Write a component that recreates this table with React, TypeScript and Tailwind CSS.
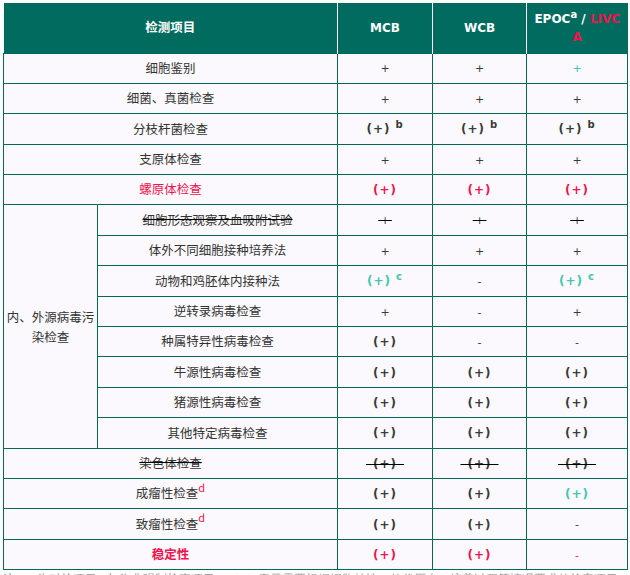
const cjk = { fontFamily: '"Noto Sans CJK SC", "Noto Sans", sans-serif' };
const lat = { fontFamily: '"DejaVu Sans", Verdana, sans-serif' };

type Mark = {
  v: string;
  sup?: string;
  tone?: "dark" | "red" | "teal";
  strike?: boolean;
};

type Row = {
  label: string;
  labelTone?: "dark" | "red";
  bold?: boolean;
  strike?: boolean;
  labelSup?: string;
  cells: Mark[];
  group?: boolean;
};

const toneClass = {
  dark: "text-[#3a3a3a]",
  red: "text-[#f0134d]",
  teal: "text-[#45c4b4]",
};

const P: Mark = { v: "+" };
const PP: Mark = { v: "(+)" };
const D: Mark = { v: "-" };

const rows: Row[] = [
  { label: "细胞鉴别", cells: [P, P, { v: "+", tone: "teal" }] },
  { label: "细菌、真菌检查", cells: [P, P, P] },
  {
    label: "分枝杆菌检查",
    cells: [
      { v: "(+)", sup: "b" },
      { v: "(+)", sup: "b" },
      { v: "(+)", sup: "b" },
    ],
  },
  { label: "支原体检查", cells: [P, P, P] },
  {
    label: "螺原体检查",
    labelTone: "red",
    cells: [
      { v: "(+)", tone: "red" },
      { v: "(+)", tone: "red" },
      { v: "(+)", tone: "red" },
    ],
  },
  {
    label: "细胞形态观察及血吸附试验",
    strike: true,
    group: true,
    cells: [
      { v: "+", strike: true },
      { v: "+", strike: true },
      { v: "+", strike: true },
    ],
  },
  { label: "体外不同细胞接种培养法", group: true, cells: [P, P, P] },
  {
    label: "动物和鸡胚体内接种法",
    group: true,
    cells: [
      { v: "(+)", sup: "c", tone: "teal" },
      D,
      { v: "(+)", sup: "c", tone: "teal" },
    ],
  },
  { label: "逆转录病毒检查", group: true, cells: [P, D, P] },
  { label: "种属特异性病毒检查", group: true, cells: [PP, D, D] },
  { label: "牛源性病毒检查", group: true, cells: [PP, PP, PP] },
  { label: "猪源性病毒检查", group: true, cells: [PP, PP, PP] },
  { label: "其他特定病毒检查", group: true, cells: [PP, PP, PP] },
  {
    label: "染色体检查",
    strike: true,
    cells: [
      { v: "(+)", strike: true },
      { v: "(+)", strike: true },
      { v: "(+)", strike: true },
    ],
  },
  { label: "成瘤性检查", labelSup: "d", cells: [PP, PP, { v: "(+)", tone: "teal" }] },
  { label: "致瘤性检查", labelSup: "d", cells: [PP, PP, D] },
  {
    label: "稳定性",
    labelTone: "red",
    bold: true,
    cells: [
      { v: "(+)", tone: "red" },
      { v: "(+)", tone: "red" },
      { v: "-", tone: "red" },
    ],
  },
];

const td = "border border-[#00695c] text-center align-middle h-[30.4px] p-0";

function MarkCell({ m }: { m: Mark }) {
  const tone = toneClass[m.tone ?? "dark"];
  const paren = m.v === "(+)";
  return (
    <td className={td}>
      <span
        className={`${tone} ${paren ? "text-[12px] font-semibold tracking-[1px]" : "text-[11px]"}`}
        style={lat}
      >
        <span className={m.strike ? "line-through decoration-black" : ""}>
          {m.strike ? (paren ? "\u2002(+)\u2002" : "\u2009+\u2009") : m.v}
        </span>
        {m.sup && (
          <sup className="ml-[5px] text-[10px] font-bold top-[-0.5em]">{m.sup}</sup>
        )}
      </span>
    </td>
  );
}

export default function App() {
  return (
    <div className="w-[630px] h-[575px] overflow-hidden bg-white">
      <table
        className="ml-[3px] mt-[3px] w-[624px] border-collapse table-fixed bg-[#fbf9fd]"
        style={cjk}
      >
        <colgroup>
          <col className="w-[94px]" />
          <col className="w-[240px]" />
          <col className="w-[95px]" />
          <col className="w-[94px]" />
          <col className="w-[101px]" />
        </colgroup>
        <thead>
          <tr className="bg-[#006b5e] text-white">
            <th colSpan={2} className="h-[50px] border-r border-white text-[12.5px] font-bold p-0">
              检测项目
            </th>
            <th className="border-r border-white text-[12px] font-bold p-0" style={lat}>
              MCB
            </th>
            <th className="border-r border-white text-[12px] font-bold p-0" style={lat}>
              WCB
            </th>
            <th className="text-[12px] font-bold p-0 leading-[18px]" style={lat}>
              EPOC<sup className="text-[10px] top-[-0.45em]">a</sup> /{" "}
              <span className="text-[#f0134d]">
                LIVC
                <br />A
              </span>
            </th>
          </tr>
        </thead>
        <tbody className="text-[12.5px] text-[#333333]">
          {rows.map((r, i) => {
            const labelCls = `${r.labelTone === "red" ? "text-[#f0134d]" : ""} ${
              r.bold ? "font-bold" : ""
            } ${r.strike ? "line-through decoration-black" : ""}`;
            return (
              <tr key={i}>
                {!r.group && (
                  <td colSpan={2} className={td}>
                    <span className={labelCls}>{r.label}</span>
                    {r.labelSup && (
                      <sup className="text-[#f0134d] text-[11px] top-[-0.6em]">{r.labelSup}</sup>
                    )}
                  </td>
                )}
                {r.group && i === 5 && (
                  <td rowSpan={8} className={`${td} px-[1px] leading-[20px]`}>
                    内、外源病毒污染检查
                  </td>
                )}
                {r.group && (
                  <td className={td}>
                    <span className={labelCls}>{r.label}</span>
                  </td>
                )}
                {r.cells.map((m, j) => (
                  <MarkCell key={j} m={m} />
                ))}
              </tr>
            );
          })}
        </tbody>
      </table>
      <p className="ml-[3px] mt-[1px] text-[12px] leading-[16px] text-[#999999] whitespace-nowrap">
        注：a 为对检项目；b 为非强制检查项目；（+）表示需要根据细胞特性、传代历史、培养过程等情况要求的检定项目
      </p>
    </div>
  );
}
